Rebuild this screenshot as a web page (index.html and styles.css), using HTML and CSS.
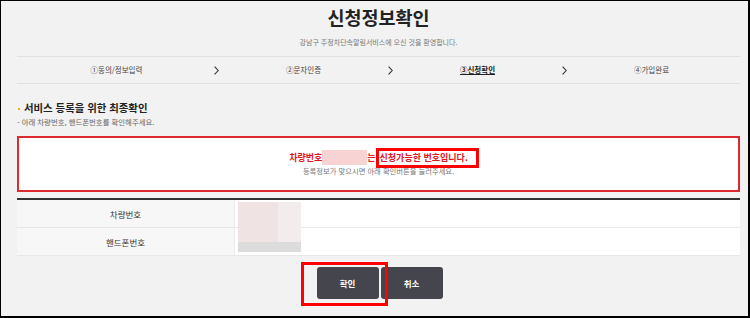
FILE: index.html
```html
<!DOCTYPE html>
<html lang="ko">
<head>
    <meta charset="UTF-8">
    <meta name="viewport" content="width=device-width, initial-scale=1.0">
    <title>신청정보확인</title>
    <link rel="stylesheet" href="styles.css">
</head>
<body>
    <div class="frame">
        <!-- 상단 타이틀 -->
        <h1 class="page-title">신청정보확인</h1>
        <p class="page-sub">강남구 주정차단속알림서비스에 오신 것을 환영합니다.</p>

        <!-- 단계 표시 -->
        <ol class="steps">
            <li>①동의/정보입력</li>
            <li class="arrow"><svg width="5" height="9" viewBox="0 0 5 9"><polyline points="0.6,0.6 4.2,4.5 0.6,8.4" fill="none" stroke="#333" stroke-width="1.1"/></svg></li>
            <li>②문자인증</li>
            <li class="arrow"><svg width="5" height="9" viewBox="0 0 5 9"><polyline points="0.6,0.6 4.2,4.5 0.6,8.4" fill="none" stroke="#333" stroke-width="1.1"/></svg></li>
            <li class="current">③신청확인</li>
            <li class="arrow"><svg width="5" height="9" viewBox="0 0 5 9"><polyline points="0.6,0.6 4.2,4.5 0.6,8.4" fill="none" stroke="#333" stroke-width="1.1"/></svg></li>
            <li>④가입완료</li>
        </ol>

        <!-- 최종확인 -->
        <h2 class="sec-title"><span class="dot"></span>서비스 등록을 위한 최종확인</h2>
        <p class="sec-desc">- 아래 차량번호, 핸드폰번호를 확인해주세요.</p>

        <div class="notice">
            <p class="notice-main">차량번호<span class="blank"></span>는<span class="mark">신청가능한 번호입니다.</span></p>
            <p class="notice-sub">등록정보가 맞으시면 아래 확인버튼을 눌러주세요.</p>
        </div>

        <div class="info-table">
            <div class="row">
                <div class="th">차량번호</div>
                <div class="td"></div>
            </div>
            <div class="row">
                <div class="th">핸드폰번호</div>
                <div class="td"></div>
            </div>
            <div class="censor"><span class="c1"></span><span class="c2"></span></div>
        </div>

        <div class="btns">
            <span class="btn-mark"><button class="btn">확인</button></span>
            <button class="btn">취소</button>
        </div>
    </div>
</body>
</html>
```

FILE: styles.css
```css
* {
    box-sizing: border-box;
}

html, body {
    margin: 0;
    padding: 0;
    background: #fff;
}

body {
    font-family: "Noto Sans CJK KR", "Noto Sans", sans-serif;
    color: #333;
}

.frame {
    width: 750px;
    height: 318px;
    overflow: hidden;
    background: #f2f2f2;
    border: 1px solid #000;
    border-right-width: 2px;
    border-bottom-width: 2px;
    padding: 0 8px 0 16px;
}

/* 타이틀 */
.page-title {
    margin: 5px 0 0;
    font-size: 18.5px;
    line-height: 22px;
    font-weight: 700;
    color: #222;
    text-align: center;
}

.page-sub {
    margin: 9px 0 0;
    font-size: 7px;
    line-height: 10px;
    color: #777;
    text-align: center;
}

/* 단계 */
.steps {
    list-style: none;
    margin: 9px 0 0;
    padding: 0 0 0 43px;
    height: 28px;
    border-top: 1px solid #e2e2e2;
    border-bottom: 1px solid #e2e2e2;
    display: grid;
    grid-template-columns: 113px repeat(6, 87px);
    align-items: center;
    font-size: 7.5px;
    color: #444;
}

.steps li {
    text-align: center;
    line-height: 10px;
}

.steps .arrow {
    display: flex;
    justify-content: center;
}

.steps .arrow svg {
    display: block;
}

.steps .current {
    color: #222;
    font-weight: 700;
    text-decoration: underline;
}

/* 최종확인 */
.sec-title {
    margin: 17px 0 0;
    font-size: 10.4px;
    line-height: 14px;
    font-weight: 700;
    color: #222;
    display: flex;
    align-items: center;
}

.sec-title .dot {
    width: 2px;
    height: 2px;
    background: #f4b400;
    margin: 2px 4px 0 1px;
}

.sec-desc {
    margin: 2px 0 0;
    font-size: 7.4px;
    line-height: 10px;
    color: #666;
}

.notice {
    margin-top: 9px;
    height: 56px;
    border: 2px solid #dd2a2e;
    background: #fff;
    padding-top: 12px;
    text-align: center;
}

.notice p {
    margin: 0;
}

.notice-main {
    font-size: 9px;
    line-height: 16px;
    font-weight: 700;
    color: #e2141c;
}

.notice-main .blank {
    display: inline-block;
    width: 45px;
    height: 15px;
    background: #f7d3d4;
    vertical-align: -4px;
}

.notice-main .mark {
    position: relative;
    margin-left: 4px;
}

.notice-main .mark::after {
    content: '';
    position: absolute;
    left: -4px;
    right: -11px;
    top: -3px;
    bottom: -4px;
    border: 3px solid #ff0000;
}

.notice-sub {
    font-size: 7.3px;
    line-height: 10px;
    color: #777;
}

/* 정보 테이블 */
.info-table {
    position: relative;
    margin-top: 6px;
    border-top: 2px solid #333;
    background: #fff;
}

.info-table .row {
    display: grid;
    grid-template-columns: 218px 1fr;
    height: 28px;
    border-bottom: 1px solid #e8e8e8;
}

.info-table .th {
    background: #f7f7f7;
    border-right: 1px solid #ececec;
    display: flex;
    align-items: center;
    justify-content: center;
    font-size: 8.5px;
    color: #333;
}

.info-table .td {
    background: #fff;
}

.censor {
    position: absolute;
    left: 221px;
    top: 2px;
    width: 63px;
    height: 50px;
    display: flex;
}

.censor span {
    height: 100%;
    background: linear-gradient(to bottom, transparent 80%, #dcdcdc 80%);
}

.censor .c1 {
    width: 40px;
    background-color: #f0e3e3;
}

.censor .c2 {
    width: 23px;
    background-color: #f3ecec;
}

/* 버튼 */
.btns {
    margin-top: 11px;
    display: flex;
    justify-content: center;
    gap: 2px;
    padding-left: 2px;
}

.btn {
    width: 62px;
    height: 32px;
    border: none;
    border-radius: 3px;
    background: #45454d;
    color: #fff;
    font-family: inherit;
    font-size: 8.5px;
    font-weight: 700;
    padding: 0;
}

.btn-mark {
    position: relative;
    display: flex;
}

.btn-mark::after {
    content: '';
    position: absolute;
    left: -16px;
    right: -9px;
    top: -5px;
    bottom: -7px;
    border: 3px solid #ff0000;
    z-index: 1;
}
```
